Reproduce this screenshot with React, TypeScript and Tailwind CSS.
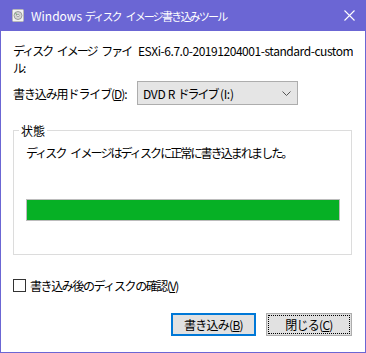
import React from 'react';

const font = "font-['Yu_Gothic_UI','Noto_Sans_CJK_JP',sans-serif]";

const DiscIcon: React.FC = () => (
  <svg width="12" height="13" viewBox="0 0 12 13" className="shrink-0">
    <rect x="0.5" y="0.5" width="11" height="12" rx="1" fill="#f2f2f2" stroke="#b8b8b8" />
    <circle cx="6" cy="6.5" r="4" fill="#d6d6d6" stroke="#8a8a8a" strokeWidth="0.8" />
    <circle cx="6" cy="6.5" r="1.2" fill="#ffffff" stroke="#777" strokeWidth="0.6" />
    <path d="M3.5 4.5 L5 5.5" stroke="#5aa05a" strokeWidth="1" />
  </svg>
);

const App: React.FC = () => {
  return (
    <div className={`w-[366px] h-[353px] flex flex-col bg-white border border-t-0 border-[#6b66d4] text-[12px] leading-[17px] text-black ${font}`}>
      {/* Title bar */}
      <div className="h-[31px] shrink-0 bg-[#6b66d4] flex items-center pl-[11px] pr-[9px] text-white">
        <DiscIcon />
        <span className="ml-[7px] whitespace-nowrap">
          Windows <span className="text-[11px] tracking-[-1.8px] [word-spacing:4px]">ディスク イメージ書き込みツール</span>
        </span>
        <svg width="11" height="11" viewBox="0 0 11 11" className="ml-auto mr-[1px]">
          <path d="M0.5 0.5 L10.5 10.5 M10.5 0.5 L0.5 10.5" stroke="#ffffff" strokeWidth="1.1" />
        </svg>
      </div>

      <div className="flex-1 flex flex-col px-3 pt-[11px]">
        {/* Image file */}
        <div className="flex">
          <div className="w-[125px] shrink-0 whitespace-nowrap tracking-[-2px] [word-spacing:4px]">
            ディスク イメージ ファイ
            <br />
            ル:
          </div>
          <div className="whitespace-nowrap overflow-hidden tracking-[-0.45px]">ESXi-6.7.0-20191204001-standard-customized</div>
        </div>

        {/* Drive */}
        <div className="flex items-center mt-[5px]">
          <div className="w-[124px] shrink-0 whitespace-nowrap tracking-[-1.1px]">
            書き込み用ドライブ(<span className="underline">D</span>):
          </div>
          <div className="w-[161px] h-[24px] border border-[#adadad] bg-[#e5e5e5] flex items-center pl-[5px] pr-[6px]">
            <span className="whitespace-nowrap tracking-[-0.3px]">
              DVD R <span className="tracking-[-2px]">ドライブ</span> (I:)
            </span>
            <svg width="9" height="5" viewBox="0 0 9 5" className="ml-auto">
              <path d="M0.5 0.5 L4.5 4.5 L8.5 0.5" fill="none" stroke="#555" strokeWidth="1" />
            </svg>
          </div>
        </div>

        {/* Status group */}
        <fieldset className="mt-[17px] border border-[#dcdcdc] px-3 pb-[33px] mr-[1px]">
          <legend className="ml-[-7px] px-[2px]">状態</legend>
          <div className="mt-[5px] whitespace-nowrap tracking-[-1.9px] [word-spacing:4px]">
            ディスク イメージはディスクに正常に書き込まれました。
          </div>
          <div className="mt-[38px] mr-[-1px] h-[22px] border border-[#bcbcbc] bg-[#e6e6e6] p-0">
            <div className="h-full w-full bg-[#06b025]" />
          </div>
        </fieldset>

        {/* Verify */}
        <label className="flex items-center mt-[22px]">
          <span className="w-[13px] h-[13px] border border-[#333333] bg-white shrink-0" />
          <span className="ml-[4px] tracking-[-1.4px]">
            書き込み後のディスクの確認(<span className="underline">V</span>)
          </span>
        </label>

        {/* Buttons */}
        <div className="flex justify-end gap-[10px] mt-[19px] mr-[1px]">
          <button className="w-[85px] h-[23px] border-2 border-[#0078d7] bg-[#e1e1e1] flex items-center justify-center">
            <span className="tracking-[-0.75px]">
              書き込み(<span className="underline">B</span>)
            </span>
          </button>
          <button className="w-[86px] h-[23px] border border-[#adadad] bg-[#e1e1e1] p-[1px]">
            <span className="w-full h-full border border-dotted border-black flex items-center justify-center">
              <span className="tracking-[-0.75px]">
                閉じる(<span className="underline">C</span>)
              </span>
            </span>
          </button>
        </div>
      </div>
    </div>
  );
};

export default App;
